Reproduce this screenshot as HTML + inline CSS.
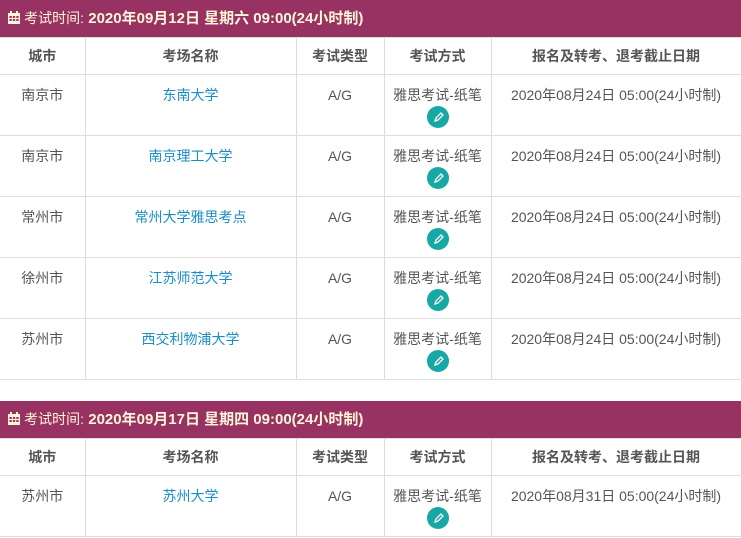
<!DOCTYPE html>
<html><head><meta charset="utf-8"><style>
body{margin:0;background:#fff;font-family:"Liberation Sans","Noto Sans CJK SC",sans-serif;font-size:14px;color:#555;width:741px;height:538px;overflow:hidden}
.bar{height:37px;background:#973262;color:#fdf5d8;font-weight:bold;font-size:15px;line-height:37px;padding-left:8px;box-sizing:border-box}
.bar .l{font-weight:normal;font-size:14px}
table{border-collapse:collapse;width:741px;table-layout:fixed}
td,th{border:1px solid #ddd;text-align:center;padding:0;line-height:18px}
th{height:37px;font-size:14px;color:#555;box-sizing:border-box}
td{height:61px;vertical-align:top;padding-top:11px;box-sizing:border-box}
tr td:first-child,tr th:first-child{border-left:none}
a{color:#1a8dc6;text-decoration:none}
.ic{display:block;margin:2px auto 0;width:22px;height:22px;border-radius:50%;background:#17a8a6}
.gap{height:21px}
</style></head><body>
<div class="bar"><svg width="12" height="13" viewBox="0 0 12 13" style="vertical-align:-1px"><rect x="0" y="2" width="12" height="11" fill="#fdf5d8"/><g fill="#973262"><rect x="1.5" y="5" width="2.3" height="2"/><rect x="4.9" y="5" width="2.3" height="2"/><rect x="8.3" y="5" width="2.3" height="2"/><rect x="1.5" y="8" width="2.3" height="2"/><rect x="4.9" y="8" width="2.3" height="2"/><rect x="8.3" y="8" width="2.3" height="2"/></g><rect x="2" y="0" width="2" height="3" fill="#fdf5d8"/><rect x="8" y="0" width="2" height="3" fill="#fdf5d8"/></svg> <span class="l">考试时间:</span> 2020年09月12日 星期六 09:00(24小时制)</div>
<table>
<colgroup><col style="width:85px"><col style="width:211px"><col style="width:88px"><col style="width:107px"><col style="width:250px"></colgroup>
<tr><th>城市</th><th>考场名称</th><th>考试类型</th><th>考试方式</th><th>报名及转考、退考截止日期</th></tr>
<tr><td>南京市</td><td><a>东南大学</a></td><td>A/G</td><td>雅思考试-纸笔<span class="ic"><svg width="22" height="22"><path d="M8 15l1-3 5-5 2 2-5 5z M8 15l3-1" stroke="#fff" stroke-width="1.3" fill="none"/></svg></span></td><td>2020年08月24日 05:00(24小时制)</td></tr>
<tr><td>南京市</td><td><a>南京理工大学</a></td><td>A/G</td><td>雅思考试-纸笔<span class="ic"><svg width="22" height="22"><path d="M8 15l1-3 5-5 2 2-5 5z M8 15l3-1" stroke="#fff" stroke-width="1.3" fill="none"/></svg></span></td><td>2020年08月24日 05:00(24小时制)</td></tr>
<tr><td>常州市</td><td><a>常州大学雅思考点</a></td><td>A/G</td><td>雅思考试-纸笔<span class="ic"><svg width="22" height="22"><path d="M8 15l1-3 5-5 2 2-5 5z M8 15l3-1" stroke="#fff" stroke-width="1.3" fill="none"/></svg></span></td><td>2020年08月24日 05:00(24小时制)</td></tr>
<tr><td>徐州市</td><td><a>江苏师范大学</a></td><td>A/G</td><td>雅思考试-纸笔<span class="ic"><svg width="22" height="22"><path d="M8 15l1-3 5-5 2 2-5 5z M8 15l3-1" stroke="#fff" stroke-width="1.3" fill="none"/></svg></span></td><td>2020年08月24日 05:00(24小时制)</td></tr>
<tr><td>苏州市</td><td><a>西交利物浦大学</a></td><td>A/G</td><td>雅思考试-纸笔<span class="ic"><svg width="22" height="22"><path d="M8 15l1-3 5-5 2 2-5 5z M8 15l3-1" stroke="#fff" stroke-width="1.3" fill="none"/></svg></span></td><td>2020年08月24日 05:00(24小时制)</td></tr>
</table>
<div class="gap"></div>
<div class="bar"><svg width="12" height="13" viewBox="0 0 12 13" style="vertical-align:-1px"><rect x="0" y="2" width="12" height="11" fill="#fdf5d8"/><g fill="#973262"><rect x="1.5" y="5" width="2.3" height="2"/><rect x="4.9" y="5" width="2.3" height="2"/><rect x="8.3" y="5" width="2.3" height="2"/><rect x="1.5" y="8" width="2.3" height="2"/><rect x="4.9" y="8" width="2.3" height="2"/><rect x="8.3" y="8" width="2.3" height="2"/></g><rect x="2" y="0" width="2" height="3" fill="#fdf5d8"/><rect x="8" y="0" width="2" height="3" fill="#fdf5d8"/></svg> <span class="l">考试时间:</span> 2020年09月17日 星期四 09:00(24小时制)</div>
<table>
<colgroup><col style="width:85px"><col style="width:211px"><col style="width:88px"><col style="width:107px"><col style="width:250px"></colgroup>
<tr><th>城市</th><th>考场名称</th><th>考试类型</th><th>考试方式</th><th>报名及转考、退考截止日期</th></tr>
<tr><td>苏州市</td><td><a>苏州大学</a></td><td>A/G</td><td>雅思考试-纸笔<span class="ic"><svg width="22" height="22"><path d="M8 15l1-3 5-5 2 2-5 5z M8 15l3-1" stroke="#fff" stroke-width="1.3" fill="none"/></svg></span></td><td>2020年08月31日 05:00(24小时制)</td></tr>
</table>
</body></html>
